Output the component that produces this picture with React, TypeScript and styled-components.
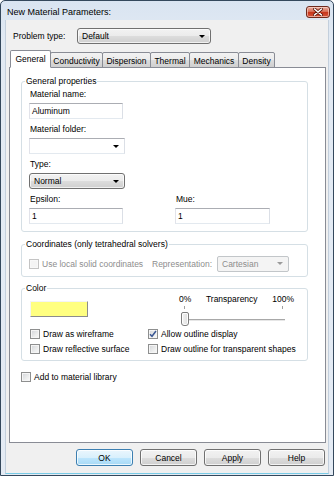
import React from "react";
import styled, { createGlobalStyle, css } from "styled-components";

const Global = createGlobalStyle`
  html, body { margin: 0; padding: 0; background: #ffffff; }
  body {
    font-family: "Liberation Sans", Arial, sans-serif;
    font-size: 8.5px;
    color: #000;
  }
  * { box-sizing: border-box; }
`;

const Window = styled.div`
  width: 334px;
  height: 476px;
  border: 1px solid #34485c;
  border-radius: 5px 5px 0 0;
  background: linear-gradient(#d9e4f1, #e2eaf3 40px, #e4ebf4);
  display: flex;
  flex-direction: column;
`;

const TitleBar = styled.div`
  height: 19px;
  flex: none;
  display: flex;
  align-items: center;
  justify-content: space-between;
  padding: 0 3px 0 6px;
`;

const TitleText = styled.span`
  font-size: 9px;
  color: #000;
  padding-top: 2px;
`;

const CloseBtn = styled.div`
  width: 24px;
  height: 12px;
  margin-top: 2px;
  border: 1px solid #6e2a1d;
  border-radius: 3px;
  background: linear-gradient(#eab1a2, #d86e57 45%, #c7361d 55%, #d6543a);
  box-shadow: inset 0 0 0 1px rgba(255, 220, 210, 0.6);
  display: flex;
  align-items: center;
  justify-content: center;
`;

const Client = styled.div`
  flex: 1;
  margin: 0 4px 1px 4px;
  border-left: 1px solid #c3cfdc;
  border-right: 1px solid #c3cfdc;
  border-bottom: 1px solid #79cbe6;
  background: #f0f0f0;
  padding: 8px 0 0 0;
  display: flex;
  flex-direction: column;
`;

const ProblemRow = styled.div`
  display: flex;
  align-items: center;
  height: 16px;
  margin-left: 7px;
`;

const RowLabel = styled.span<{ $w: number }>`
  width: ${(p) => p.$w}px;
  flex: none;
`;

type ComboKind = "button" | "edit" | "disabled";

const Combo = styled.div<{ $w: number; $kind: ComboKind; $mt?: number }>`
  width: ${(p) => p.$w}px;
  height: 16px;
  margin-top: ${(p) => p.$mt ?? 0}px;
  display: flex;
  align-items: center;
  justify-content: space-between;
  padding: 0 5px 0 4px;
  ${(p) =>
    p.$kind === "button"
      ? css`
          border: 1px solid #707070;
          border-radius: 3px;
          background: linear-gradient(#f2f2f2 0%, #ebebeb 50%, #dddddd 50%, #cfcfcf 100%);
          box-shadow: inset 0 0 0 1px rgba(255, 255, 255, 0.7);
          color: #000;
        `
      : p.$kind === "edit"
      ? css`
          border: 1px solid;
          border-color: #abadb3 #dbdfe6 #e3e9ef #e2e3ea;
          background: #fff;
          color: #000;
        `
      : css`
          border: 1px solid #c2c6c9;
          border-radius: 2px;
          background: #f4f4f4;
          color: #8d8d8d;
        `}
`;

const Arrow = styled.span<{ $dim?: boolean }>`
  width: 0;
  height: 0;
  border-left: 3px solid transparent;
  border-right: 3px solid transparent;
  border-top: 3px solid ${(p) => (p.$dim ? "#9a9a9a" : "#000")};
  flex: none;
`;

const TabStrip = styled.div`
  display: flex;
  align-items: flex-end;
  height: 18px;
  margin: 6px 0 0 4px;
  position: relative;
  z-index: 1;
`;

const Tab = styled.div<{ $w: number; $active?: boolean }>`
  position: relative;
  width: ${(p) => p.$w}px;
  margin-left: -1px;
  display: flex;
  align-items: center;
  justify-content: center;
  border: 1px solid #898c95;
  border-radius: 2px 2px 0 0;
  &:first-child { margin-left: 0; }
  ${(p) =>
    p.$active
      ? css`
          height: 18px;
          background: #fff;
          border-bottom-color: #fff;
          z-index: 2;
          padding-bottom: 1px;
        `
      : css`
          height: 16px;
          background: linear-gradient(#f2f2f2 0%, #ebebeb 50%, #dddddd 50%, #cfcfcf 100%);
          padding-top: 1px;
        `}
`;

const Panel = styled.div`
  margin: -1px 0 0 3px;
  width: 317px;
  height: 376px;
  flex: none;
  border: 1px solid #898c95;
  background: #fff;
  padding: 0 0 0 11px;
  display: flex;
  flex-direction: column;
`;

const Group = styled.fieldset<{ $mt: number; $pt: number; $pb: number }>`
  margin: ${(p) => p.$mt}px 0 0 0;
  width: 287px;
  min-width: 0;
  border: 1px solid #d5dfe5;
  border-radius: 3px;
  padding: ${(p) => p.$pt}px 7px ${(p) => p.$pb}px 7px;
`;

const Legend = styled.legend`
  padding: 0 1px;
  margin-left: -4px;
  line-height: 10px;
  font-size: 8.5px;
  color: #000;
`;

const Field = styled.div<{ $mt?: number }>`
  display: flex;
  flex-direction: column;
  margin-top: ${(p) => p.$mt ?? 0}px;
`;

const FieldLabel = styled.span`
  display: block;
  line-height: 10px;
  height: 10px;
  padding-left: 1px;
`;

const TextBox = styled.div<{ $w: number }>`
  width: ${(p) => p.$w}px;
  height: 16px;
  margin-top: 4px;
  border: 1px solid;
  border-color: #abadb3 #dbdfe6 #e3e9ef #e2e3ea;
  background: #fff;
  padding-left: 2px;
  line-height: 14px;
`;

const TwoCols = styled.div`
  display: grid;
  grid-template-columns: 146px 1fr;
  margin-top: 5px;
`;

const CheckRow = styled.div<{ $h?: number; $disabled?: boolean }>`
  display: flex;
  align-items: center;
  gap: 3px;
  height: ${(p) => p.$h ?? 15}px;
  color: ${(p) => (p.$disabled ? "#8d8d8d" : "#000")};
  white-space: nowrap;
`;

const Box = styled.span<{ $disabled?: boolean }>`
  width: 10px;
  height: 10px;
  flex: none;
  border: 1px solid ${(p) => (p.$disabled ? "#c4c4c4" : "#8e8f8f")};
  background: ${(p) =>
    p.$disabled ? "#f4f4f4" : "linear-gradient(135deg, #d2d4d8 0%, #eceded 60%, #fbfbfb 100%)"};
  box-shadow: inset 0 0 0 1px ${(p) => (p.$disabled ? "#f8f8f8" : "#f5f5f5")};
  display: flex;
  align-items: center;
  justify-content: center;
`;

const CoordRow = styled.div`
  display: grid;
  grid-template-columns: 123px 65px 72px;
  align-items: center;
  height: 17px;
`;

const SideLabel = styled.span`
  color: #8d8d8d;
  white-space: nowrap;
`;

const ColorTop = styled.div`
  display: flex;
  align-items: flex-start;
  height: 32px;
`;

const Swatch = styled.div`
  width: 58px;
  height: 16px;
  margin: 7px 0 0 1px;
  background: #ffff80;
  border: 1px solid;
  border-color: #f4f4f4 #8c8c8c #8c8c8c #f4f4f4;
`;

const SliderBlock = styled.div`
  width: 115px;
  margin-left: 91px;
  display: flex;
  flex-direction: column;
`;

const SliderLabels = styled.div`
  display: flex;
  justify-content: space-between;
  line-height: 10px;
  height: 10px;
`;

const Ticks = styled.div`
  display: flex;
  justify-content: space-between;
  height: 3px;
  margin-top: 2px;
  padding: 0 11px 0 5px;
`;

const Tick = styled.span`
  width: 1px;
  height: 3px;
  background: #a0a0a0;
`;

const Track = styled.div`
  position: relative;
  width: 104px;
  height: 14px;
  margin: 3px 0 0 2px;
`;

const TrackLine = styled.div`
  position: absolute;
  left: 3px;
  right: 0;
  top: 7px;
  height: 2px;
  border-top: 1px solid #a8a8a8;
  border-bottom: 1px solid #e6e6e6;
`;

const Thumb = styled.div`
  position: absolute;
  left: 0;
  top: 0;
  width: 8px;
  height: 14px;
  border: 1px solid #7d7d7d;
  border-radius: 2px 2px 3px 3px;
  background: linear-gradient(90deg, #f4f4f4, #dedede);
  box-shadow: inset 0 0 0 1px #fdfdfd;
`;

const CheckGrid = styled.div`
  display: grid;
  grid-template-columns: 118px 1fr;
  padding-left: 1px;
`;

const LibraryRow = styled(CheckRow)`
  margin-top: 10px;
  height: 12px;
`;

const ButtonBar = styled.div`
  display: flex;
  justify-content: flex-end;
  gap: 7px;
  margin-top: 6px;
  padding-right: 3px;
`;

const Button = styled.div<{ $default?: boolean }>`
  width: 57px;
  height: 17px;
  display: flex;
  align-items: center;
  justify-content: center;
  border-radius: 3px;
  border: 1px solid ${(p) => (p.$default ? "#3c7fb1" : "#707070")};
  background: ${(p) =>
    p.$default
      ? "linear-gradient(#eaf6fd 0%, #d9f0fc 50%, #bee6fd 50%, #a7d9f5 100%)"
      : "linear-gradient(#f2f2f2 0%, #ebebeb 50%, #dddddd 50%, #cfcfcf 100%)"};
  box-shadow: inset 0 0 0 1px rgba(255, 255, 255, 0.75);
`;

const Check: React.FC<{ label: string; checked?: boolean; disabled?: boolean }> = ({
  label,
  checked,
  disabled,
}) => (
  <CheckRow $disabled={disabled}>
    <Box $disabled={disabled}>
      {checked && (
        <svg width="8" height="8" viewBox="0 0 8 8">
          <path d="M1 4.2 L3 6.3 L7 1" fill="none" stroke="#3a5794" strokeWidth="1.5" />
        </svg>
      )}
    </Box>
    <span>{label}</span>
  </CheckRow>
);

const tabs: { name: string; w: number }[] = [
  { name: "General", w: 41 },
  { name: "Conductivity", w: 53 },
  { name: "Dispersion", w: 49 },
  { name: "Thermal", w: 40 },
  { name: "Mechanics", w: 50 },
  { name: "Density", w: 37 },
];

export default function App() {
  return (
    <>
      <Global />
      <Window>
        <TitleBar>
          <TitleText>New Material Parameters:</TitleText>
          <CloseBtn>
            <svg width="10" height="8" viewBox="0 0 10 8">
              <path d="M1.5 1 L8.5 7 M8.5 1 L1.5 7" stroke="#5a1408" strokeWidth="3" strokeLinecap="round" />
              <path d="M1.5 1 L8.5 7 M8.5 1 L1.5 7" stroke="#ffffff" strokeWidth="1.6" strokeLinecap="round" />
            </svg>
          </CloseBtn>
        </TitleBar>
        <Client>
          <ProblemRow>
            <RowLabel $w={64}>Problem type:</RowLabel>
            <Combo $w={134} $kind="button">
              <span>Default</span>
              <Arrow />
            </Combo>
          </ProblemRow>

          <TabStrip>
            {tabs.map((t, i) => (
              <Tab key={t.name} $w={t.w} $active={i === 0}>
                {t.name}
              </Tab>
            ))}
          </TabStrip>

          <Panel>
            <Group $mt={8} $pt={3} $pb={7}>
              <Legend>General properties</Legend>
              <Field>
                <FieldLabel>Material name:</FieldLabel>
                <TextBox $w={94}>Aluminum</TextBox>
              </Field>
              <Field $mt={5}>
                <FieldLabel>Material folder:</FieldLabel>
                <Combo $w={96} $kind="edit" $mt={4}>
                  <span />
                  <Arrow />
                </Combo>
              </Field>
              <Field $mt={5}>
                <FieldLabel>Type:</FieldLabel>
                <Combo $w={96} $kind="button" $mt={4}>
                  <span>Normal</span>
                  <Arrow />
                </Combo>
              </Field>
              <TwoCols>
                <Field>
                  <FieldLabel>Epsilon:</FieldLabel>
                  <TextBox $w={94}>1</TextBox>
                </Field>
                <Field>
                  <FieldLabel>Mue:</FieldLabel>
                  <TextBox $w={95}>1</TextBox>
                </Field>
              </TwoCols>
            </Group>

            <Group $mt={7} $pt={6} $pb={4}>
              <Legend>Coordinates (only tetrahedral solvers)</Legend>
              <CoordRow>
                <Check label="Use local solid coordinates" disabled />
                <SideLabel>Representation:</SideLabel>
                <Combo $w={72} $kind="disabled">
                  <span>Cartesian</span>
                  <Arrow $dim />
                </Combo>
              </CoordRow>
            </Group>

            <Group $mt={6} $pt={1} $pb={4}>
              <Legend>Color</Legend>
              <ColorTop>
                <Swatch />
                <SliderBlock>
                  <SliderLabels>
                    <span>0%</span>
                    <span>Transparency</span>
                    <span>100%</span>
                  </SliderLabels>
                  <Ticks>
                    <Tick />
                    <Tick />
                  </Ticks>
                  <Track>
                    <TrackLine />
                    <Thumb />
                  </Track>
                </SliderBlock>
              </ColorTop>
              <CheckGrid>
                <Check label="Draw as wireframe" />
                <Check label="Allow outline display" checked />
                <Check label="Draw reflective surface" />
                <Check label="Draw outline for transparent shapes" />
              </CheckGrid>
            </Group>

            <LibraryRow>
              <Box />
              <span>Add to material library</span>
            </LibraryRow>
          </Panel>

          <ButtonBar>
            <Button $default>OK</Button>
            <Button>Cancel</Button>
            <Button>Apply</Button>
            <Button>Help</Button>
          </ButtonBar>
        </Client>
      </Window>
    </>
  );
}
